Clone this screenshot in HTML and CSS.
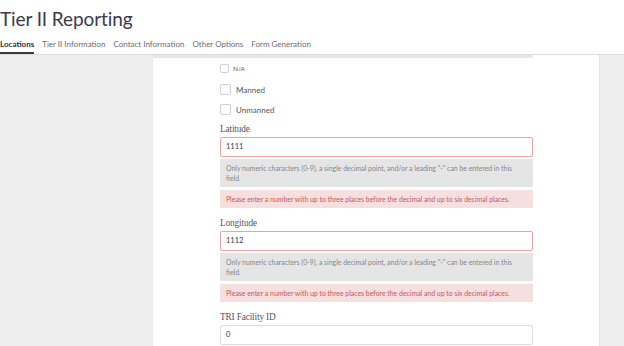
FILE: index.html
```html
<!DOCTYPE html>
<html>
<head>
<meta charset="utf-8">
<link rel="stylesheet" href="styles.css">
</head>
<body>
<header class="header">
  <h1 class="title">Tier II Reporting</h1>
  <nav class="tabs">
    <span class="tab active">Locations</span>
    <span class="tab">Tier II Information</span>
    <span class="tab">Contact Information</span>
    <span class="tab">Other Options</span>
    <span class="tab">Form Generation</span>
  </nav>
</header>
<div class="layout">
  <aside class="side-left"></aside>
  <main class="main">
    <div class="card-edge"></div>
    <div class="form">
      <label class="check small"><span class="box"></span>N/A</label>
      <label class="check"><span class="box"></span>Manned</label>
      <label class="check"><span class="box"></span>Unmanned</label>

      <div class="field">
        <div class="label">Latitude</div>
        <div class="input invalid">1111</div>
        <div class="help">Only numeric characters (0-9), a single decimal point, and/or a leading "-" can be entered in this field.</div>
        <div class="error">Please enter a number with up to three places before the decimal and up to six decimal places.</div>
      </div>

      <div class="field">
        <div class="label">Longitude</div>
        <div class="input invalid">1112</div>
        <div class="help">Only numeric characters (0-9), a single decimal point, and/or a leading "-" can be entered in this field.</div>
        <div class="error">Please enter a number with up to three places before the decimal and up to six decimal places.</div>
      </div>

      <div class="field">
        <div class="label">TRI Facility ID</div>
        <div class="input">0</div>
      </div>
    </div>
  </main>
  <aside class="side-right"></aside>
</div>
</body>
</html>
```
FILE: styles.css
```css
html, body {
  margin: 0;
  padding: 0;
  background: #ffffff;
  font-family: Lato, "Open Sans", sans-serif;
  overflow: hidden;
}
.header {
  background: #fff;
}
.title {
  margin: 0;
  padding: 6px 0 0 0;
  height: 31px;
  font-weight: 400;
  font-size: 19px;
  line-height: 26px;
  color: #3a3a4c;
  letter-spacing: -0.1px;
}
.tabs {
  display: flex;
  gap: 8px;
  height: 17px;
  border-bottom: 1px solid #dcdcdc;
  box-shadow: 0 1px 1px #e8e8e8;
}
.tab {
  font-size: 8px;
  line-height: 14px;
  color: #6b6b72;
  height: 15px;
}
.tab.active {
  color: #2e2e3a;
  font-weight: 700;
  border-bottom: 2px solid #3a3a46;
}
.layout {
  display: flex;
  height: 292px;
}
.side-left {
  width: 153px;
  background: #ededed;
}
.side-right {
  width: 24px;
  background: #ededed;
  border-left: 1px solid #e2e2e2;
}
.main {
  flex: 1;
  background: #fff;
}
.card-edge {
  width: 380px;
  height: 3px;
  background: #e6e6e6;
}
.form {
  margin-left: 67px;
  width: 313px;
  padding-top: 5px;
}
.check {
  display: flex;
  align-items: center;
  gap: 5px;
  font-size: 8px;
  color: #55555e;
  height: 11px;
  margin-bottom: 9px;
}
.check:nth-child(3) {
  margin-bottom: 8px;
}
.check.small {
  font-size: 6.5px;
  height: 10px;
  margin-bottom: 11px;
  gap: 4px;
}
.box {
  width: 11px;
  height: 11px;
  border: 1px solid #cfcfd4;
  border-radius: 2px;
  box-sizing: border-box;
  background: #fff;
}
.check.small .box {
  width: 9px;
  height: 9px;
}
.field {
  margin-bottom: 9px;
}
.label {
  font-family: "Liberation Serif", "DejaVu Serif", serif;
  font-size: 9.3px;
  letter-spacing: -0.15px;
  color: #55555f;
  line-height: 12px;
  margin-bottom: 2px;
}
.input {
  height: 20px;
  box-sizing: border-box;
  border: 1px solid #dcdce0;
  border-radius: 2px;
  padding: 0 5px;
  font-size: 7.5px;
  line-height: 18px;
  color: #3a3a44;
}
.input.invalid {
  border-color: #eaa3a3;
}
.help {
  margin-top: 2px;
  background: #e5e5e5;
  color: #85858c;
  font-size: 6.9px;
  line-height: 10px;
  padding: 4px 14px 4px 6px;
}
.error {
  margin-top: 3px;
  background: #f5dfdf;
  color: #c35a5a;
  font-size: 6.9px;
  line-height: 10px;
  padding: 4px 6px 4px 6px;
}
```
